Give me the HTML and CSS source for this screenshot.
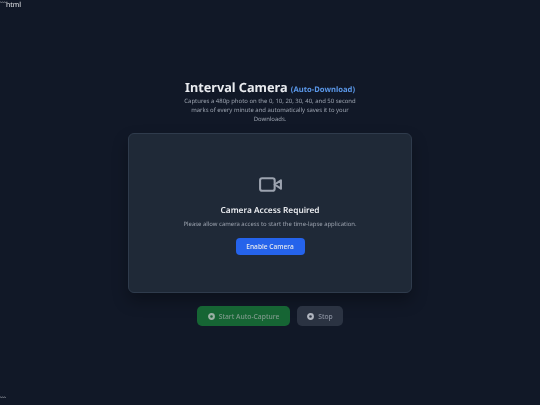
FILE: index.html
```html
<!DOCTYPE html>
<html lang="en">
<head>
<meta charset="utf-8">
<title>Interval Camera</title>
<link rel="stylesheet" href="styles.css">
</head>
<body>
<div class="stray">```html</div>
<main class="app">
  <header class="head">
    <h1 class="title">Interval Camera <span class="tag">(Auto-Download)</span></h1>
    <p class="desc">Captures a 480p photo on the 0, 10, 20, 30, 40, and 50 second marks of every minute and automatically saves it to your Downloads.</p>
  </header>
  <section class="card">
    <svg class="cam" viewBox="0 0 24 24" fill="none" stroke="currentColor" stroke-width="2" stroke-linecap="round" stroke-linejoin="round"><path d="M22 8l-6 4 6 4V8z"/><rect x="2" y="6" width="14" height="12" rx="2"/></svg>
    <h2 class="card-title">Camera Access Required</h2>
    <p class="card-text">Please allow camera access to start the time-lapse application.</p>
    <button class="enable">Enable Camera</button>
  </section>
  <div class="controls">
    <button class="ctl start"><svg class="ctl-icon" viewBox="0 0 10 10"><circle cx="5" cy="5" r="3.4" fill="none" stroke="currentColor" stroke-width="3"/></svg>Start Auto-Capture</button>
    <button class="ctl stop"><svg class="ctl-icon" viewBox="0 0 10 10"><circle cx="5" cy="5" r="3.4" fill="none" stroke="currentColor" stroke-width="3"/></svg>Stop</button>
  </div>
</main>
<div class="stray end">```</div>
</body>
</html>
```

FILE: styles.css
```css
* { box-sizing: border-box; }
html, body { height: 100%; }
body {
  margin: 0;
  height: 405px;
  overflow: hidden;
  background: #111827;
  font-family: "Noto Sans", sans-serif;
  text-rendering: geometricPrecision;
  color: #f3f4f6;
  display: flex;
  flex-direction: column;
}
.stray { font-size: 7px; line-height: 12px; color: #e5e7eb; height: 10px; will-change: transform; }
.end { margin-top: auto; height: 8px; line-height: 8px; }
.app {
  flex: 1;
  display: flex;
  flex-direction: column;
  align-items: center;
  padding-top: 68px;
  will-change: transform;
}
.head { width: 284px; text-align: center; }
.title { margin: 0; font-size: 12.7px; line-height: 18px; font-weight: 700; color: #e9ebef; white-space: nowrap; }
.tag { font-size: 7.65px; line-height: 0; font-weight: 700; color: #5a97e8; }
.desc { margin: 1px auto 0; width: 182px; font-size: 5.95px; line-height: 8.9px; color: #9ca3af; }
.card {
  margin-top: 9.5px;
  width: 284px;
  height: 160px;
  background: #1f2937;
  border: 1px solid #2f3b4c;
  border-radius: 6px;
  box-shadow: 0 8px 16px rgba(0,0,0,.3);
  display: flex;
  flex-direction: column;
  align-items: center;
  padding-top: 38px;
}
.cam { width: 25px; height: 25px; color: #9ca3af; }
.card-title { margin: 7px 0 0; font-size: 8.3px; line-height: 14px; font-weight: 600; color: #e9ebef; }
.card-text { margin: 1px 0 0; font-size: 5.95px; line-height: 10px; color: #9ca3af; }
.enable {
  margin-top: 9px;
  width: 69px;
  height: 17px;
  border: 0;
  border-radius: 4px;
  background: #2563eb;
  color: #e9ebef;
  font: 500 6.6px "Noto Sans", sans-serif;
}
.controls { margin-top: 13px; display: flex; gap: 7px; }
.ctl {
  height: 20px;
  border: 0;
  border-radius: 5px;
  display: flex;
  align-items: center;
  justify-content: center;
  gap: 4px;
  font: 500 6.75px "Noto Sans", sans-serif;
  color: #9ca3af;
}
.ctl-icon { width: 7px; height: 7px; }
.start { width: 93px; background: #166534; color: #7f9a8c; }
.start .ctl-icon { color: #9aafa4; }
.stop { width: 46px; background: #2b3342; color: #8b92a0; }
.stop .ctl-icon { color: #b0b5bf; }
```
